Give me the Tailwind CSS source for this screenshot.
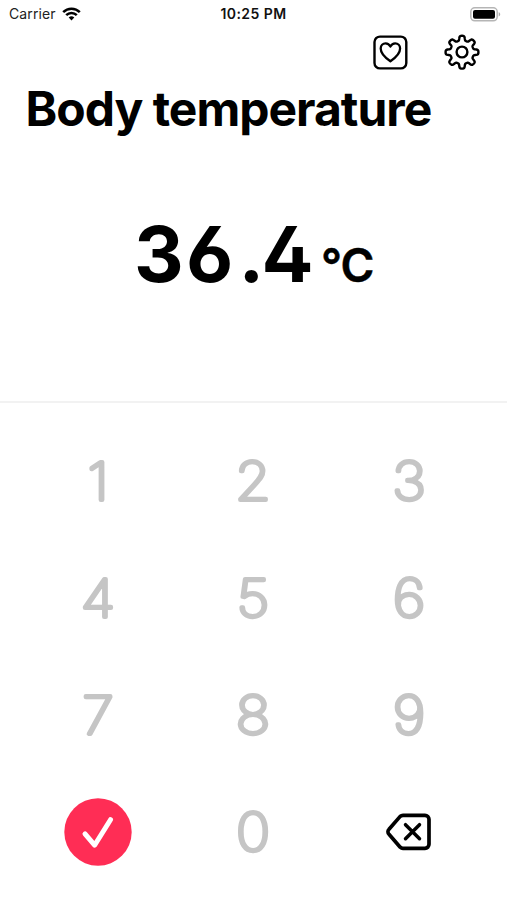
<!DOCTYPE html>
<html lang="en">
<head>
<meta charset="utf-8">
<meta name="viewport" content="width=device-width, initial-scale=1">
<title>Body temperature</title>
<script src="https://cdn.jsdelivr.net/npm/@tailwindcss/browser@4"></script>
</head>
<body class="bg-white">
<main class="flex h-[900px] w-[507px] flex-col overflow-hidden bg-white font-['Inter',sans-serif] text-black">
  <header class="grid h-7 shrink-0 grid-cols-3 items-center pr-[6px] pl-[9px] text-[14px] leading-none">
    <div class="flex items-center gap-[6px] text-[#222]"><span class="tracking-[0.1px]">Carrier</span>
      <svg class="h-[14px] w-[19px]" viewBox="0 0 19 14" fill="none" stroke="#000" stroke-width="2.5"><path d="M1.2 5.1a11.7 11.7 0 0 1 16.6 0M4.2 8.1a7.5 7.5 0 0 1 10.6 0"/><path d="M9.5 13.5 6.7 10.6a4 4 0 0 1 5.6 0Z" fill="#000" stroke="none"/></svg>
    </div>
    <div class="-ml-[3px] text-center font-semibold tracking-[0.45px] whitespace-nowrap text-[#111]">10:25 PM</div>
    <svg class="h-[15px] w-[31px] justify-self-end" viewBox="0 0 31 15"><rect x=".8" y=".8" width="26.4" height="13" rx="4" fill="#fff" stroke="#b5b5b5" stroke-width="1.5"/><rect x="3" y="3" width="22" height="8.7" rx="2" fill="#000"/><path d="M28.7 5.2c2 .7 2 3.500 0 4.200Z" fill="#aaa"/></svg>
  </header>

  <div class="flex h-[48px] shrink-0 items-center justify-end gap-[36px] pr-[27px]">
    <svg class="h-[36px] w-[36px]" viewBox="0 0 36 36" fill="none" stroke="#000" stroke-linejoin="round"><rect x="2.500" y="2.600" width="31.800" height="31.800" rx="5.500" stroke-width="2.400"/><path d="M18.400 27.300C13.900 24.300 8.700 19.500 8.700 14.600c0-3 2.200-5.200 4.900-5.200 2.100 0 3.800 1.200 4.800 3.200 1-2 2.700-3.200 4.800-3.200 2.700 0 4.900 2.200 4.900 5.200 0 4.900-5.200 9.700-9.700 12.700Z" stroke-width="2.300"/></svg>
    <svg class="h-[36px] w-[36px]" viewBox="0 0 36 36" fill="none" stroke="#000" stroke-width="2.400" stroke-linejoin="round"><path id="gear"/><circle cx="18" cy="18" r="5.400"/></svg>
  </div>

  <h1 class="h-[66px] shrink-0 pl-[25.500px] text-[48px] leading-[66px] font-bold tracking-[-1px] whitespace-nowrap">Body temperature</h1>

  <section class="flex h-[258px] shrink-0 justify-center pt-[64px]">
    <svg class="h-[100px] w-[260px]" viewBox="0 0 260 100" font-family="Inter, sans-serif" fill="#000"><text x="10 62 114.500 137.500" y="76" font-size="77" font-weight="700" style="font-feature-settings:'cv02','cv03','ss07' 0">36.4</text><text x="197 216.500" y="76" font-size="46" font-weight="600" stroke="#000" stroke-width=".5">°C</text></svg>
  </section>

  <div class="mt-px h-[2px] shrink-0 bg-[#f2f2f2]"></div>

  <section class="mt-[19px] grid h-[469px] shrink-0 grid-cols-3 grid-rows-4 place-items-center px-[20px]">
    <svg class="h-[70px] w-[60px]" viewBox="0 0 60 70"><text class="key">1</text></svg>
    <svg class="h-[70px] w-[60px]" viewBox="0 0 60 70"><text class="key">2</text></svg>
    <svg class="h-[70px] w-[60px]" viewBox="0 0 60 70"><text class="key">3</text></svg>
    <svg class="h-[70px] w-[60px]" viewBox="0 0 60 70"><text class="key">4</text></svg>
    <svg class="h-[70px] w-[60px]" viewBox="0 0 60 70"><text class="key">5</text></svg>
    <svg class="h-[70px] w-[60px]" viewBox="0 0 60 70"><text class="key">6</text></svg>
    <svg class="h-[70px] w-[60px]" viewBox="0 0 60 70"><text class="key">7</text></svg>
    <svg class="h-[70px] w-[60px]" viewBox="0 0 60 70"><text class="key">8</text></svg>
    <svg class="h-[70px] w-[60px]" viewBox="0 0 60 70"><text class="key">9</text></svg>
    <svg class="h-[68px] w-[68px]" viewBox="0 0 68 68" fill="none"><circle cx="34" cy="34" r="33.700" fill="#ff2d55"/><path d="m21 35.800 9.600 11.400L46.500 21.700" stroke="#fff" stroke-width="5" stroke-linecap="round" stroke-linejoin="round"/></svg>
    <svg class="h-[70px] w-[60px]" viewBox="0 0 60 70"><text class="key">0</text></svg>
    <svg class="h-[40px] w-[46px]" viewBox="0 0 46 40" fill="none" stroke="#000" stroke-linecap="round" stroke-linejoin="round"><path d="M18 3h22a4 4 0 0 1 4 4v25a4 4 0 0 1-4 4H18a4 4 0 0 1-2.800-1.100L4 22a3.500 3.500 0 0 1 0-5L15.200 4.100A4 4 0 0 1 18 3Z" transform="translate(-1 .3)" stroke-width="3.700"/><path d="m19.500 12.700 14 14m0-14-14 14" stroke-width="3.500"/></svg>
  </section>
</main>
<script>
  // Eight-tooth cog outline, drawn with softened shoulders.
  const teeth = [];
  for (let i = 0; i < 240; i++) {
    const a = i / 240 * Math.PI * 2;
    const r = 14.1 + 2.3 * Math.tanh(2.2 * Math.cos(8 * a)) / Math.tanh(2.2);
    teeth.push((18 + r * Math.sin(a)).toFixed(2) + ' ' + (18.2 - r * Math.cos(a)).toFixed(2));
  }
  document.getElementById('gear').setAttribute('d', 'M' + teeth.join('L') + 'Z');
  // Thin numerals with a round-joined stroke give the keypad its rounded digits.
  document.querySelectorAll('.key').forEach(k => {
    const set = { transform: 'translate(30 53.6) scale(1.1 1)', 'text-anchor': 'middle', 'font-size': 52.5, 'font-weight': 100, fill: '#c5c5c5', stroke: '#c5c5c5', 'stroke-width': 4, 'stroke-linejoin': 'round', 'stroke-linecap': 'round' };
    for (const n in set) k.setAttribute(n, set[n]);
  });
</script>
</body>
</html>
